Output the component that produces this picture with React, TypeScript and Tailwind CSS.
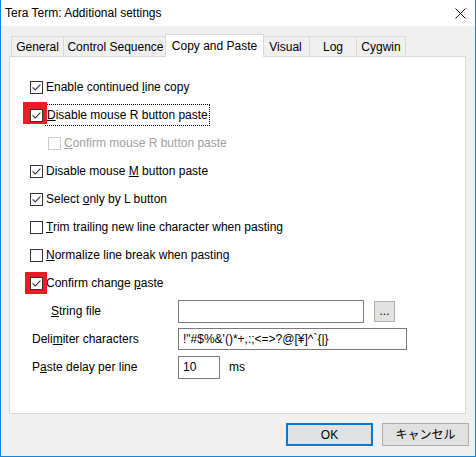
import React from 'react';

function Check({ checked = false, disabled = false }: { checked?: boolean; disabled?: boolean }) {
  return (
    <span
      className={
        disabled
          ? 'relative z-10 w-[13px] h-[13px] border border-[#cccccc] bg-white flex items-center justify-center shrink-0'
          : 'relative z-10 w-[13px] h-[13px] border border-[#333333] bg-white flex items-center justify-center shrink-0'
      }
    >
      {checked && (
        <svg width="11" height="11" viewBox="0 0 11 11">
          <path d="M1.6 5.4 L4.2 8 L9.4 2.6" stroke="#333333" strokeWidth="1.1" fill="none" />
        </svg>
      )}
    </span>
  );
}

function Row({
  children,
  checked,
  disabled,
  indent,
  red,
}: {
  children: React.ReactNode;
  checked?: boolean;
  disabled?: boolean;
  indent?: boolean;
  red?: 'a' | 'b';
}) {
  return (
    <div className={indent ? 'h-[28px] flex items-center pl-[38px]' : 'h-[28px] flex items-center pl-[20px]'}>
      <span className="relative flex">
        {red === 'a' && <span className="absolute left-[-7px] top-[-7px] w-[24px] h-[22px] bg-[#ed1c24]" />}
        {red === 'b' && <span className="absolute left-[-5px] top-[-5px] w-[22px] h-[22px] bg-[#ed1c24]" />}
        <Check checked={checked} disabled={disabled} />
      </span>
      <span className={disabled ? 'ml-[3px] text-[#a0a0a0]' : 'ml-[3px] text-black'}>{children}</span>
    </div>
  );
}

const tabBase = 'h-[20px] -ml-px border border-b-0 border-[#d9d9d9] bg-[#f0f0f0] flex items-center justify-center';

export default function App() {
  return (
    <div className="w-[476px] h-[457px] flex flex-col border-x border-b border-[#1883d7] bg-[#f0f0f0] text-[12px] leading-none text-black font-['Liberation_Sans','Noto_Sans_CJK_JP',sans-serif]">
      <div className="h-[26px] shrink-0 bg-white flex items-center justify-between pl-[4px] pr-[9px]">
        <span>Tera Term: Additional settings</span>
        <svg width="11" height="11" viewBox="0 0 11 11">
          <path d="M0.5 0.5 L10.5 10.5 M10.5 0.5 L0.5 10.5" stroke="#111111" strokeWidth="1" />
        </svg>
      </div>
      <div className="pt-[8px] pl-[10px] flex items-end h-[30px] shrink-0">
        <div className={tabBase + ' w-[53px] ml-0'}>General</div>
        <div className={tabBase + ' w-[105px]'}>Control Sequence</div>
        <div className="relative z-10 w-[99px] h-[23px] -ml-[3px] -mr-[2px] -mb-px border border-b-0 border-[#d9d9d9] bg-white flex items-center justify-center">
          Copy and Paste
        </div>
        <div className={tabBase + ' w-[49px]'}>Visual</div>
        <div className={tabBase + ' w-[48px]'}>Log</div>
        <div className={tabBase + ' w-[50px]'}>Cygwin</div>
      </div>
      <div className="ml-[8px] w-[457px] h-[358px] shrink-0 border border-[#d9d9d9] bg-white pt-[16px] flex flex-col">
        <Row checked>
          Enable continued <u>l</u>ine copy
        </Row>
        <Row checked red="a">
          <span className="-ml-px border border-dotted border-black px-px py-[3px]">
            <u>D</u>isable mouse R button paste
          </span>
        </Row>
        <Row disabled indent>
          <u>C</u>onfirm mouse R button paste
        </Row>
        <Row checked>
          Disable mouse <u>M</u> button paste
        </Row>
        <Row checked>
          Select <u>o</u>nly by L button
        </Row>
        <Row>
          <u>T</u>rim trailing new line character when pasting
        </Row>
        <Row>
          <u>N</u>ormalize line break when pasting
        </Row>
        <Row checked red="b">
          Confirm change <u>p</u>aste
        </Row>
        <div className="h-[28px] flex items-center pl-[41px]">
          <span className="w-[127px]">
            <u>S</u>tring file
          </span>
          <div className="w-[186px] h-[23px] border border-[#7a7a7a] bg-white" />
          <div className="ml-[10px] w-[21px] h-[21px] border border-[#adadad] bg-[#e1e1e1] flex items-center justify-center">
            ...
          </div>
        </div>
        <div className="h-[28px] flex items-center pl-[22px]">
          <span className="w-[146px]">
            Deli<u>m</u>iter characters
          </span>
          <div className="w-[229px] h-[22px] border border-[#7a7a7a] bg-white flex items-center pl-[4px]">
            !&quot;#$%&amp;&apos;()*+,:;&lt;=&gt;?@[¥]^`{'{'}|{'}'}
          </div>
        </div>
        <div className="h-[28px] flex items-center pl-[22px]">
          <span className="w-[146px]">
            P<u>a</u>ste delay per line
          </span>
          <div className="w-[42px] h-[23px] border border-[#7a7a7a] bg-white flex items-center pl-[4px]">10</div>
          <span className="ml-[9px]">ms</span>
        </div>
      </div>
      <div className="flex justify-end gap-[9px] pr-[6px] pt-[9px]">
        <div className="w-[87px] h-[23px] border-2 border-[#0078d7] bg-[#e1e1e1] flex items-center justify-center">OK</div>
        <div className="w-[87px] h-[23px] border border-[#adadad] bg-[#e1e1e1] flex items-center justify-center">キャンセル</div>
      </div>
    </div>
  );
}
